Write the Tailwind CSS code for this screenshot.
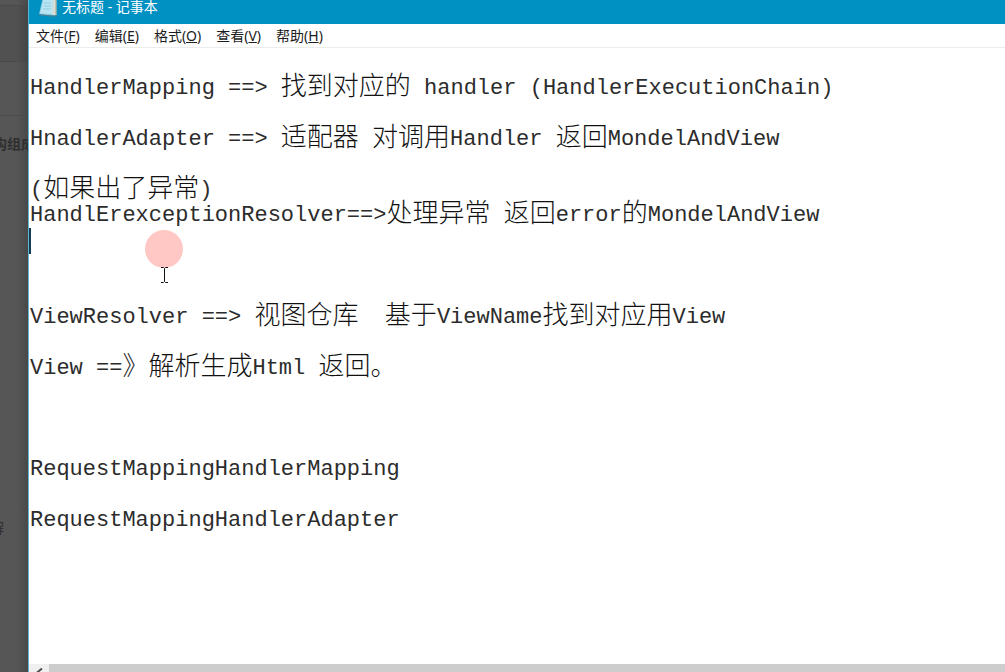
<!DOCTYPE html>
<html lang="zh-CN">
<head>
<meta charset="utf-8">
<meta name="viewport" content="width=device-width, initial-scale=1">
<title>无标题 - 记事本</title>
<script src="https://cdn.jsdelivr.net/npm/@tailwindcss/browser@4"></script>
</head>
<body class="flex h-screen overflow-hidden bg-[#545454] font-['Noto_Sans','Noto_Sans_CJK_SC',sans-serif]">

<!-- Dimmed page behind the window -->
<aside class="flex w-7 shrink-0 flex-col overflow-hidden bg-linear-to-r from-[#565656] from-60% to-[#484848] text-sm leading-5 font-bold text-[#2e2e2e]">
  <div class="h-1.5 border-b border-[#4a4a4a]"></div>
  <div class="h-14 border-b border-[#4a4a4a] bg-black/5"></div>
  <div class="h-[54px] border-b border-[#4a4a4a]"></div>
  <div class="mt-[18px] flex justify-center whitespace-nowrap">构组成</div>
  <div class="mt-[364px] flex w-1 justify-end font-normal">解</div>
</aside>

<main class="flex min-w-0 flex-1 flex-col border-l border-[#5cb5d6] bg-white">
  <header class="flex h-6 shrink-0 items-end gap-1 bg-[#0091c3] pb-[7px] pl-2.5 text-white">
    <svg class="h-5 w-[19px] shrink-0" viewBox="0 0 19 20" aria-hidden="true">
      <path d="M4 0H17.500V18.500H13L0 17.500Z" fill="#8ccce3"/>
      <path d="M5 0H14L13 17L1 16.500Z" fill="#b9e4f1"/>
      <path d="M14 0H17V18H13Z" fill="#d5dfd9"/>
      <path d="M0 17L12 18.500H18V19.500H11L0 18Z" fill="#557e88"/>
      <path d="M17 1V18" stroke="#aaa68d"/>
      <path d="M5 6H12M5 9H12M4 12H12" stroke="#91cfe3"/>
    </svg>
    <h1 class="text-sm leading-5">无标题 - 记事本</h1>
  </header>

  <nav class="flex h-6 shrink-0 items-center gap-[15px] border-b border-[#ececec] pl-[7px] text-sm leading-5 text-[#1c1c1c]" aria-label="菜单">
    <button type="button">文件(<u>F</u>)</button>
    <button type="button">编辑(<u>E</u>)</button>
    <button type="button">格式(<u>O</u>)</button>
    <button type="button">查看(<u>V</u>)</button>
    <button type="button">帮助(<u>H</u>)</button>
  </nav>

  <div class="relative min-h-0 flex-1 overflow-hidden">
    <div role="textbox" aria-multiline="true" aria-label="文本编辑区" contenteditable="true" spellcheck="false"
      class="flex h-full flex-col pt-[27px] font-['Liberation_Mono','Noto_Sans_CJK_SC',monospace] text-[22px] leading-[26px] text-[#2c2c2c] outline-none [&>p]:pl-px [&>p]:whitespace-pre [&_span]:align-[-1px] [&_span]:text-[26px] [&_span]:font-light [&_span]:text-[#111]">
      <p class="h-[51px]">HandlerMapping ==&gt; <span>找到对应的</span> handler (HandlerExecutionChain)</p>
      <p class="h-[51px]">HnadlerAdapter ==&gt; <span>适配器</span> <span>对调用</span>Handler <span>返回</span>MondelAndView</p>
      <p class="h-[25px]">(<span>如果出了异常</span>)</p>
      <p class="h-[26px]">HandlErexceptionResolver==&gt;<span>处理异常</span> <span>返回</span>error<span>的</span>MondelAndView</p>
      <div class="h-[76px]"><div class="h-[26px] w-0.5 bg-[#153c50]"></div></div>
      <p class="h-[51px]">ViewResolver ==&gt; <span>视图仓库</span>  <span>基于</span>ViewName<span>找到对应用</span>View</p>
      <p class="h-[102px]">View ==<span>》解析生成</span>Html <span>返回。</span></p>
      <p class="h-[51px]">RequestMappingHandlerMapping</p>
      <p class="h-[51px]">RequestMappingHandlerAdapter</p>
    </div>

    <!-- Click highlight and text pointer -->
    <div class="pointer-events-none absolute top-[182px] left-[116px] flex flex-col items-center" aria-hidden="true">
      <div class="size-[38px] rounded-full bg-[#ffc8c4]"></div>
      <svg class="-mt-px h-4 w-[9px]" viewBox="0 0 9 16" fill="none" stroke="#111">
        <path d="M1 .5H3.500L4.500 1.500L5.500 .5H8M4.500 1.500V14.500M1 15.500H3.500L4.500 14.500L5.500 15.500H8"/>
      </svg>
    </div>
  </div>

  <footer class="flex h-2 shrink-0 overflow-hidden bg-[#cdcdcd]">
    <button type="button" class="flex w-5 items-start justify-center bg-[#f0f0f0] pt-1" aria-label="向左滚动">
      <svg class="h-2.5 w-2 shrink-0" viewBox="0 0 8 10" fill="none" stroke="#505050" stroke-width="2"><path d="M7 .5L1.500 5L7 9.500"/></svg>
    </button>
  </footer>
</main>
</body>
</html>
